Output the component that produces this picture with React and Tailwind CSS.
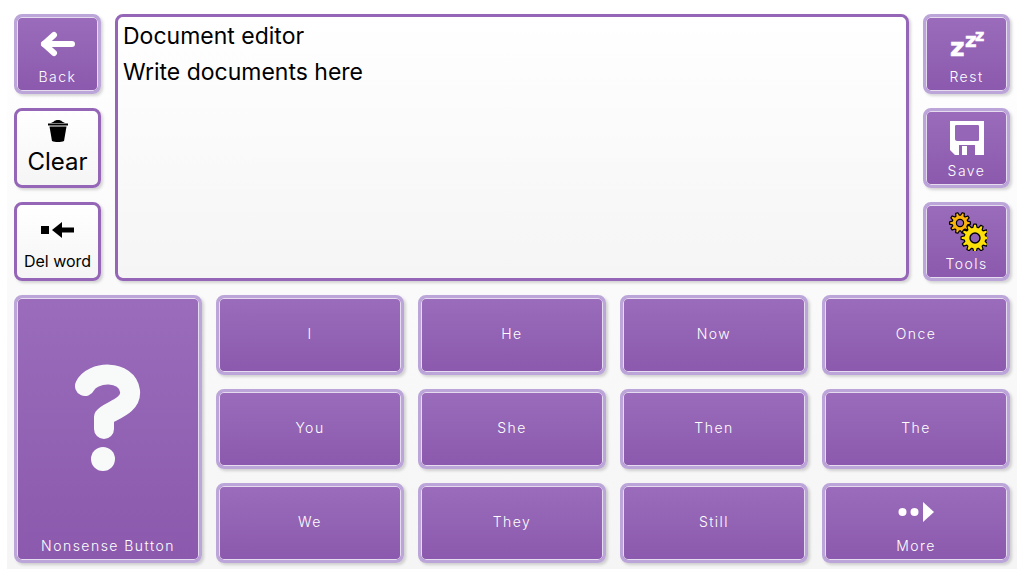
import React from 'react';

// builds a cog outline so both gears share the same tooth shape
function gearPath(cx, cy, outer, inner, teeth) {
  const pts = [];
  const step = (Math.PI * 2) / teeth;
  for (let i = 0; i < teeth; i++) {
    const a = i * step;
    const w = step / 4;
    const p = (r, t) => `${(cx + r * Math.cos(t)).toFixed(2)} ${(cy + r * Math.sin(t)).toFixed(2)}`;
    pts.push(p(inner, a - w * 1.5), p(outer, a - w * 0.7), p(outer, a + w * 0.7), p(inner, a + w * 1.5));
  }
  return `M${pts.join('L')}Z`;
}

const BackIcon = () => (
  <svg width="36" height="28" viewBox="0 0 36 28" fill="none" stroke="white" strokeWidth="6" strokeLinecap="round" strokeLinejoin="round" className="mt-[2px]">
    <path d="M4 14H32" />
    <path d="M14 5L4 14L14 23" />
  </svg>
);

const TrashIcon = () => (
  <svg width="22" height="26" viewBox="0 0 22 26" fill="black">
    <path d="M1 6.5H21V8.5H1Z" />
    <path d="M7 4.5C8 2.5 14 2.5 15 4.5L18 6H4Z" />
    <path d="M2.5 9.5H19.5L17 24C14 25.3 8 25.3 5 24Z" />
  </svg>
);

const DelWordIcon = () => (
  <svg width="34" height="18" viewBox="0 0 34 18" fill="black" className="mt-[3px]">
    <rect x="0" y="5" width="8" height="8" />
    <path d="M11 9L21 1V6.5H33V11.5H21V17Z" />
  </svg>
);

const RestIcon = () => (
  <svg width="34" height="26" viewBox="0 0 34 26" fill="white" stroke="white" strokeWidth="0.6" fontFamily="'DejaVu Sans', sans-serif" fontWeight="700" className="mt-[2px] overflow-visible">
    <text>
      <tspan x="0" y="25" fontSize="25">z</tspan>
      <tspan x="15" y="16" fontSize="20">z</tspan>
      <tspan x="25" y="10" fontSize="16">z</tspan>
    </text>
  </svg>
);

const SaveIcon = () => (
  <svg width="34" height="34" viewBox="0 0 34 34" className="mt-[2px]">
    <path fill="white" d="M0 0H34V34H25V24H9V34H5L0 29Z" />
    <path fill="#9566b7" d="M5 5C5 4 6 4 7 4H28C29 4 29 5 29 6V18C29 19 29 20 28 20H7C6 20 5 19 5 18Z" />
    <path fill="white" d="M12 25H17V34H12Z" />
  </svg>
);

const ToolsIcon = () => (
  <svg width="40" height="40" viewBox="0 0 40 40">
    <path d={gearPath(13, 12, 10.5, 7.8, 10)} fill="#fbb40c" stroke="black" strokeWidth="1.2" strokeLinejoin="round" />
    <circle cx="13" cy="12" r="3.6" fill="#9566b7" stroke="black" strokeWidth="1.2" />
    <path d={gearPath(28, 27, 14, 10.8, 12)} fill="#fde00a" stroke="black" strokeWidth="1.2" strokeLinejoin="round" />
    <circle cx="28" cy="27" r="5" fill="#8f60b3" stroke="black" strokeWidth="1.4" />
  </svg>
);

const MoreIcon = () => (
  <svg width="36" height="20" viewBox="0 0 36 20" fill="white">
    <circle cx="4.5" cy="10" r="4" />
    <circle cx="16.5" cy="10" r="4" />
    <path d="M25 0L36 10L25 20Z" />
  </svg>
);

const QuestionIcon = () => (
  <svg width="68" height="110" viewBox="0 0 68 110" fill="none" stroke="#f8fafa" strokeWidth="20" strokeLinecap="round" strokeLinejoin="round">
    <path d="M11 23C18 8 53 6 56 28C58 44 34 48 30 54V66" />
    <circle cx="29" cy="96" r="12" fill="#f8fafa" stroke="none" />
  </svg>
);

function PurpleButton({ label, icon, className = '' }) {
  return (
    <div className={`relative flex flex-col items-center justify-end rounded-lg border-[3px] border-[#bba5d9] bg-gradient-to-b from-[#9a6cbb] to-[#8b59ad] pb-[6px] text-[14px] leading-[16px] font-light tracking-[0.105em] text-white shadow-[inset_0_0_0_1px_#e6dcef,2px_2px_3px_rgba(0,0,0,0.16)] font-['Inter',sans-serif] ${className}`}>
      {icon && <div className="flex flex-1 items-center justify-center">{icon}</div>}
      <span>{label}</span>
    </div>
  );
}

function WordButton({ label }) {
  return (
    <div className="flex items-center justify-center rounded-lg border-[3px] border-[#bba5d9] bg-gradient-to-b from-[#9a6cbb] to-[#8b59ad] pb-[4px] text-[14px] font-light tracking-[0.105em] text-white shadow-[inset_0_0_0_1px_#e6dcef,2px_2px_3px_rgba(0,0,0,0.16)] font-['Inter',sans-serif]">
      {label}
    </div>
  );
}

function WhiteButton({ label, icon, labelClass }) {
  return (
    <div className="flex flex-col items-center rounded-lg border-[3px] border-[#9566b7] bg-gradient-to-b from-white to-[#f5f5f5] text-black shadow-[2px_2px_3px_rgba(0,0,0,0.16)] font-['Inter',sans-serif]">
      <div className="flex flex-1 items-center justify-center">{icon}</div>
      <span className={labelClass}>{label}</span>
    </div>
  );
}

export default function App() {
  return (
    <div className="h-[576px] w-[1024px] overflow-hidden bg-white p-[7px]">
      <div className="grid h-[562px] w-[1010px] grid-cols-[87px_87px_1fr_87px] grid-rows-[80px_80px_79px_80px_80px_80px] gap-[14px] bg-gradient-to-b from-white to-[#f5f5f5] p-[7px] pb-0">
        <PurpleButton label="Back" icon={<BackIcon />} className="col-start-1 row-start-1" />
        <div className="col-start-1 row-start-2 grid"><WhiteButton label="Clear" icon={<TrashIcon />} labelClass="mb-[9px] text-[24px] leading-[28px]" /></div>
        <div className="col-start-1 row-start-3 grid"><WhiteButton label="Del word" icon={<DelWordIcon />} labelClass="mb-[7px] text-[16px] leading-[20px]" /></div>

        <div className="col-start-2 col-end-4 row-start-1 row-end-4 rounded-lg border-[3px] border-[#9566b7] bg-gradient-to-b from-white to-[#f5f5f5] px-[5px] py-[1px] text-[23px] leading-[36px] text-black shadow-[2px_2px_3px_rgba(0,0,0,0.16)] font-['Inter',sans-serif]">
          <div>Document editor</div>
          <div>Write documents here</div>
        </div>

        <PurpleButton label="Rest" icon={<RestIcon />} className="col-start-4 row-start-1" />
        <PurpleButton label="Save" icon={<SaveIcon />} className="col-start-4 row-start-2" />
        <PurpleButton label="Tools" icon={<ToolsIcon />} className="col-start-4 row-start-3" />

        <div className="col-span-4 row-start-4 row-end-7 grid grid-cols-5 grid-rows-3 gap-[14px]">
          <PurpleButton label="Nonsense Button" icon={<QuestionIcon />} className="row-span-3" />
          <WordButton label="I" />
          <WordButton label="He" />
          <WordButton label="Now" />
          <WordButton label="Once" />
          <WordButton label="You" />
          <WordButton label="She" />
          <WordButton label="Then" />
          <WordButton label="The" />
          <WordButton label="We" />
          <WordButton label="They" />
          <WordButton label="Still" />
          <PurpleButton label="More" icon={<MoreIcon />} />
        </div>
      </div>
    </div>
  );
}
